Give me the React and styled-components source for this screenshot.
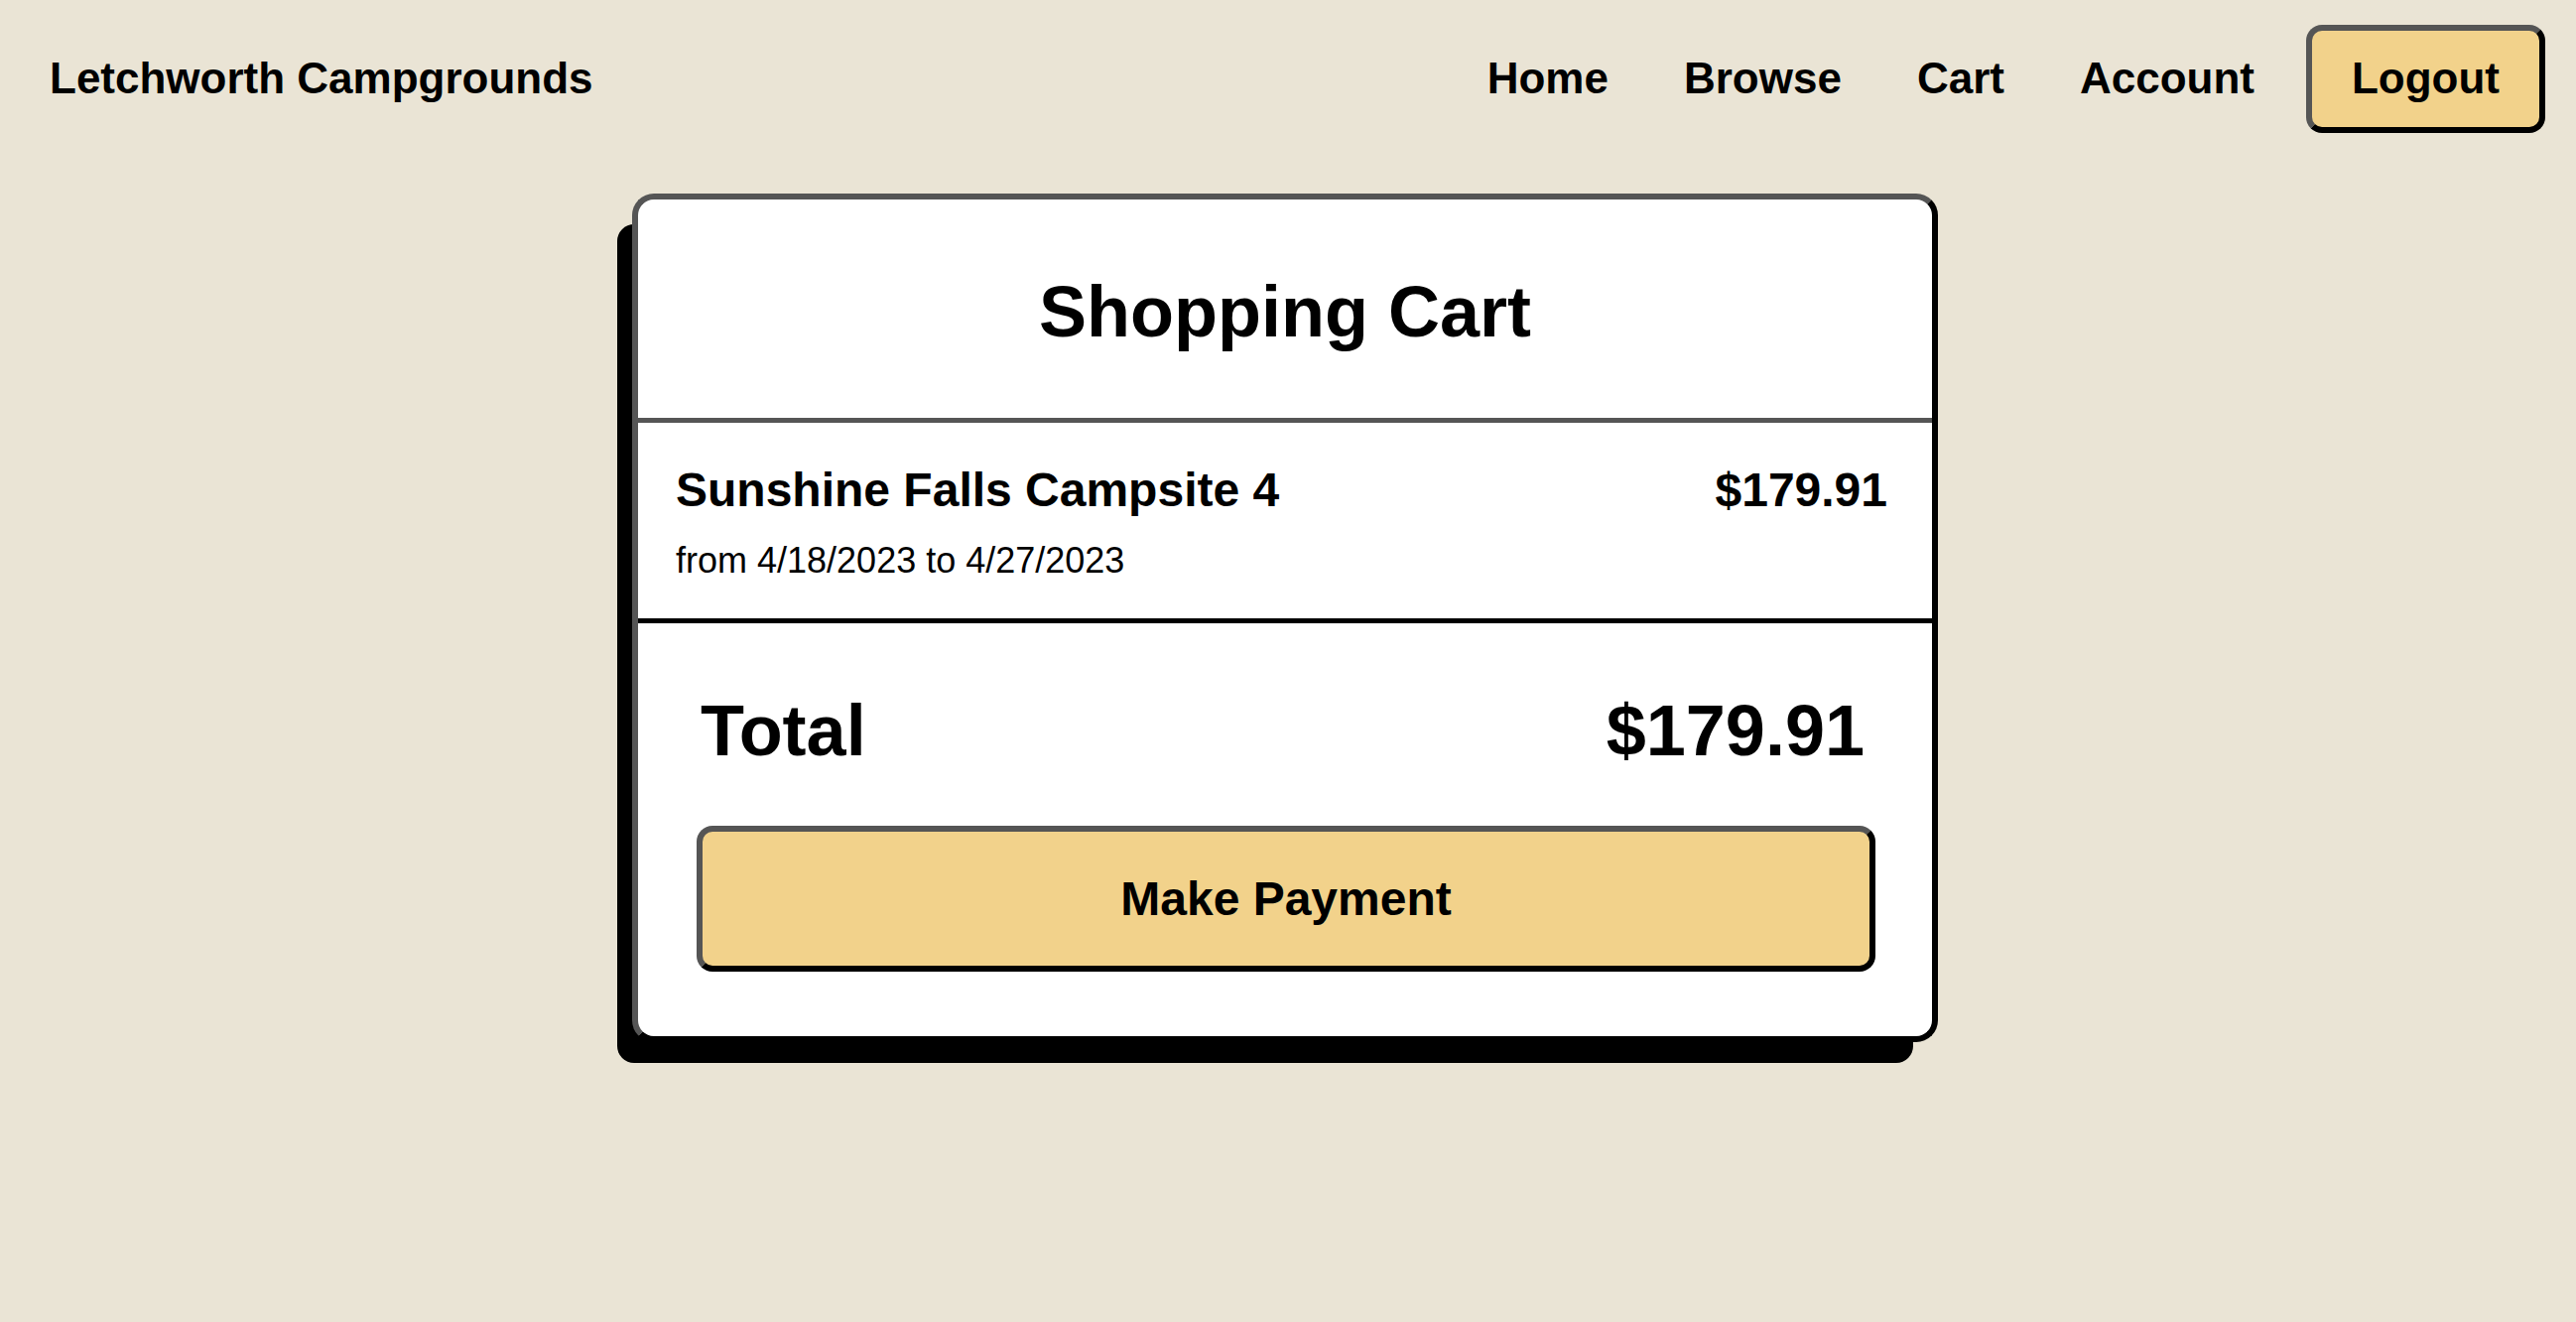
import React from 'react';
import styled, { createGlobalStyle } from 'styled-components';

const GlobalStyle = createGlobalStyle`
  html, body {
    margin: 0;
    padding: 0;
    background: #eae4d5;
    min-height: 100%;
  }
  body {
    font-family: "Liberation Sans", Arial, Helvetica, sans-serif;
    color: #000;
  }
  * {
    box-sizing: border-box;
  }
`;

const Page = styled.div`
  min-height: 1332px;
  background: #eae4d5;
`;

const NavBar = styled.nav`
  display: flex;
  align-items: center;
  justify-content: space-between;
  padding: 25px 31px 0 50px;
`;

const Brand = styled.a`
  font-size: 44px;
  font-weight: 700;
  color: #000;
  text-decoration: none;
`;

const NavRight = styled.div`
  display: flex;
  align-items: center;
  gap: 52px;
`;

const NavLinks = styled.div`
  display: flex;
  align-items: center;
  gap: 76px;
`;

const NavLink = styled.a`
  font-size: 44px;
  font-weight: 700;
  color: #000;
  text-decoration: none;
`;

const OutsetButton = styled.button`
  font-family: inherit;
  font-weight: 700;
  color: #000;
  background: #f2d28b;
  border: 6px solid;
  border-color: #555 #000 #000 #555;
  cursor: pointer;
  line-height: 1.15;
`;

const LogoutButton = styled(OutsetButton)`
  font-size: 44px;
  padding: 23px 40px;
  border-radius: 16px;
`;

const Card = styled.section`
  width: 1316px;
  margin: 61px 0 0 calc(50% - 661px);
  background: #fff;
  border: 6px solid;
  border-color: #555 #000 #000 #555;
  border-radius: 22px;
  box-shadow: -20px 26px 0 -5px #000;
`;

const CardHeader = styled.header`
  padding: 72px 40px 66px;
  text-align: center;
  h1 {
    margin: 0;
    font-size: 72px;
    line-height: 1.15;
    font-weight: 700;
  }
`;

const ItemList = styled.div`
  border-top: 5px solid #555;
  border-bottom: 5px solid #000;
`;

const Item = styled.div`
  display: flex;
  justify-content: space-between;
  align-items: flex-start;
  padding: 40px 45px 38px 38px;
`;

const ItemInfo = styled.div`
  display: flex;
  flex-direction: column;
  gap: 22px;
`;

const ItemName = styled.div`
  font-size: 48px;
  font-weight: 700;
  line-height: 1.15;
`;

const ItemDates = styled.div`
  font-size: 36px;
  line-height: 1.15;
`;

const ItemPrice = styled.div`
  font-size: 48px;
  font-weight: 700;
  line-height: 1.15;
`;

const Summary = styled.div`
  display: flex;
  flex-direction: column;
  gap: 54px;
  padding: 67px 57px 65px 59px;
`;

const TotalRow = styled.div`
  display: flex;
  justify-content: space-between;
  align-items: center;
  padding: 0 11px 0 4px;
  font-size: 72px;
  font-weight: 700;
  line-height: 1.15;
`;

const PayButton = styled(OutsetButton)`
  width: 100%;
  font-size: 48px;
  padding: 40px;
  border-radius: 16px;
`;

const cartItems = [
  {
    id: 1,
    name: 'Sunshine Falls Campsite 4',
    from: '4/18/2023',
    to: '4/27/2023',
    price: 179.91,
  },
];

const App = () => {
  const total = cartItems.reduce((sum, i) => sum + i.price, 0);
  return (
    <Page>
      <GlobalStyle />
      <NavBar>
        <Brand href="#">Letchworth Campgrounds</Brand>
        <NavRight>
          <NavLinks>
            <NavLink href="#">Home</NavLink>
            <NavLink href="#">Browse</NavLink>
            <NavLink href="#">Cart</NavLink>
            <NavLink href="#">Account</NavLink>
          </NavLinks>
          <LogoutButton>Logout</LogoutButton>
        </NavRight>
      </NavBar>
      <Card>
        <CardHeader>
          <h1>Shopping Cart</h1>
        </CardHeader>
        <ItemList>
          {cartItems.map(item => (
            <Item key={item.id}>
              <ItemInfo>
                <ItemName>{item.name}</ItemName>
                <ItemDates>from {item.from} to {item.to}</ItemDates>
              </ItemInfo>
              <ItemPrice>${item.price.toFixed(2)}</ItemPrice>
            </Item>
          ))}
        </ItemList>
        <Summary>
          <TotalRow>
            <span>Total</span>
            <span>${total.toFixed(2)}</span>
          </TotalRow>
          <PayButton>Make Payment</PayButton>
        </Summary>
      </Card>
    </Page>
  );
};

export default App;
